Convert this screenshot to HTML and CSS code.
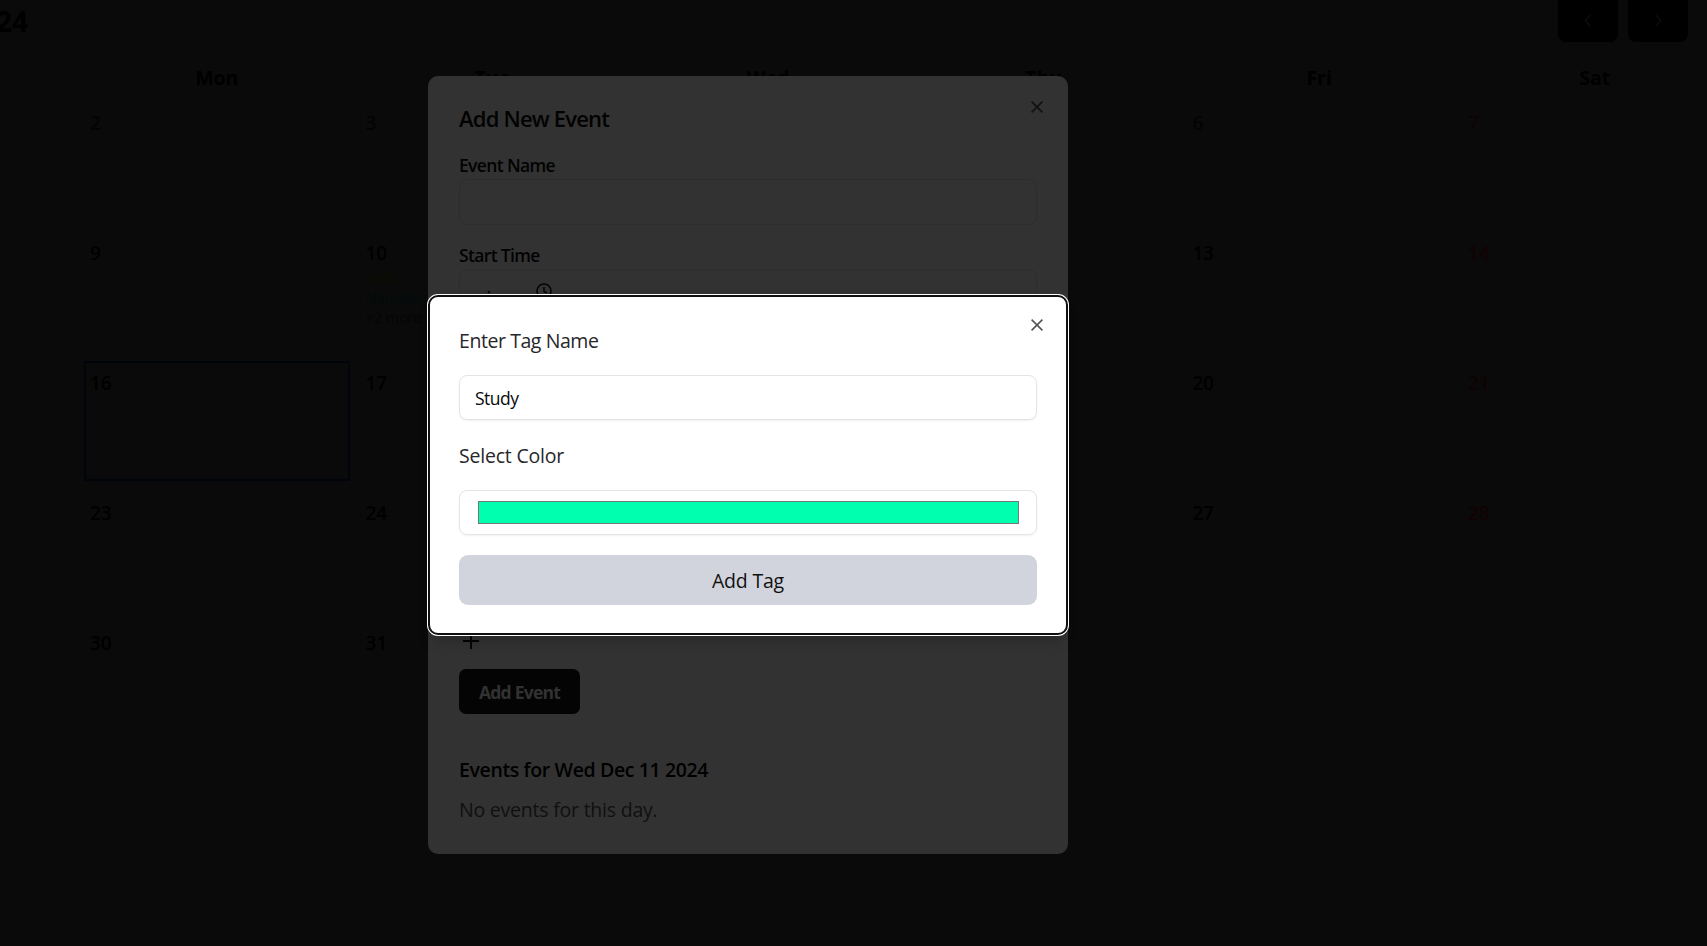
FILE: index.html
```html
<!DOCTYPE html>
<html lang="en">
<head>
<meta charset="utf-8">
<title>Calendar</title>
<link rel="stylesheet" href="styles.css">
</head>
<body>
<main class="calendar">
  <header class="toolbar">
    <h1 class="month">24</h1>
    <div class="nav">
      <button class="nav-button" aria-label="Previous"><svg width="19" height="19" viewBox="0 0 15 15"><path d="M9 3 4.9 7.5 9 12" fill="none" stroke="currentColor"/></svg></button>
      <button class="nav-button" aria-label="Next"><svg width="19" height="19" viewBox="0 0 15 15"><path d="M5.2 3l4.1 4.5L5.2 12" fill="none" stroke="currentColor"/></svg></button>
    </div>
  </header>
  <div class="weekdays"><span>Mon</span><span>Tue</span><span>Wed</span><span>Thu</span><span>Fri</span><span>Sat</span></div>
  <div class="days">
    <div class="day past">2</div><div class="day past">3</div><div class="day"></div><div class="day"></div><div class="day past">6</div><div class="day sat">7</div>
    <div class="day">9</div><div class="day">10<div class="events"><span class="yellow">Hello</span><span class="teal">Namaste</span><span class="more">+2 more</span></div></div><div class="day"></div><div class="day"></div><div class="day">13</div><div class="day sat strong">14</div>
    <div class="day today">16</div><div class="day">17</div><div class="day"></div><div class="day"></div><div class="day">20</div><div class="day sat">21</div>
    <div class="day">23</div><div class="day">24</div><div class="day"></div><div class="day"></div><div class="day">27</div><div class="day sat strong">28</div>
    <div class="day">30</div><div class="day">31</div>
  </div>
</main>

<section class="dialog event-dialog">
  <svg class="close" viewBox="0 0 12 12"><path d="M.6.6l10.8 10.8M11.4.6.6 11.4" stroke="currentColor" stroke-width="1.6"/></svg>
  <h2 class="dialog-title">Add New Event</h2>
  <label class="field-label">Event Name</label>
  <div class="field"></div>
  <label class="field-label second">Start Time</label>
  <div class="field time"><span>--:--</span><svg class="clock" viewBox="0 0 16 16" fill="none" stroke="currentColor" stroke-width="1.5"><circle cx="8" cy="8" r="7"/><path d="M8 4v4.5l3 1.5"/></svg></div>
  <svg class="plus" viewBox="0 0 18 18"><path d="M9 1v16M1 9h16" stroke="currentColor" stroke-width="1.8"/></svg>
  <button class="add-event">Add Event</button>
  <h3 class="list-title">Events for Wed Dec 11 2024</h3>
  <p class="empty">No events for this day.</p>
</section>

<section class="dialog tag-dialog">
  <svg class="close" viewBox="0 0 12 12"><path d="M.6.6l10.8 10.8M11.4.6.6 11.4" stroke="currentColor" stroke-width="1.6"/></svg>
  <p class="tag-label name-label">Enter Tag Name</p>
  <div class="tag-field">Study</div>
  <p class="tag-label">Select Color</p>
  <div class="tag-field color"><i class="swatch"></i></div>
  <button class="add-tag">Add Tag</button>
</section>
</body>
</html>
```
FILE: styles.css
```css
* { box-sizing: border-box; }
body {
  margin: 0;
  height: 946px;
  overflow: hidden;
  position: relative;
  background: #0a0a0a;
  color: #000;
  font-family: "Segoe UI", "Open Sans", sans-serif;
}
h1, h2, h3, p { margin: 0; font-weight: 400; }
button { border: 0; font: inherit; padding: 0; }

.calendar { width: 1728px; }
.toolbar {
  display: flex;
  justify-content: space-between;
  height: 64px;
  padding-right: 40px;
}
.month { margin-left: -4px; font-size: 28px; line-height: 42px; font-weight: 700; }
.nav { display: flex; gap: 10px; }
.nav-button {
  display: grid;
  place-items: center;
  width: 60px;
  height: 42px;
  padding-bottom: 2px;
  border-radius: 0 0 8px 8px;
  background: #000;
  color: #0d0d0d;
}
.weekdays, .days {
  display: grid;
  grid-template-columns: repeat(6, 265.6px);
  gap: 10px;
  padding-left: 84px;
}
.weekdays { height: 37px; font-size: 19.5px; line-height: 28px; font-weight: 700; text-align: center; }
.days { grid-auto-rows: 120px; }
.day {
  padding: 7px 5px;
  border: 1px solid #090909;
  font-size: 19px;
  line-height: 28px;
  font-weight: 600;
  letter-spacing: -.2px;
}
.past { color: #030303; }
.today { border: 2px solid #00050b; padding: 6px 4px; }
.sat { color: #0e0304; }
.sat.strong { color: #110203; }
.events { display: grid; font-size: 15px; line-height: 20px; font-weight: 400; letter-spacing: -.4px; }
.yellow { color: #0c0c02; }
.teal { color: #020c0b; }
.more { color: #050505; }

.dialog { position: absolute; left: 428px; width: 640px; }
.close { position: absolute; right: 25px; width: 12px; height: 12px; }
.event-dialog {
  top: 76px;
  height: 778px;
  padding: 23px 31px;
  border-radius: 10px;
  background: #323232;
}
.event-dialog .close { top: 25px; color: #111; }
.dialog-title { height: 53px; font-size: 22px; line-height: 38px; font-weight: 600; letter-spacing: -.8px; color: #020202; }
.field-label { display: block; height: 27px; font-size: 17.5px; line-height: 26px; font-weight: 600; letter-spacing: -.65px; color: #020202; }
.field {
  height: 46px;
  border: 1px solid #2d2d2d;
  border-radius: 8px;
}
.second { margin-top: 17px; }
.time { display: flex; gap: 33px; padding: 13px 15px; font-size: 18px; line-height: 22px; color: #020202; }
.clock { width: 16px; height: 16px; }
.plus { display: block; width: 18px; height: 18px; margin: 317px 0 19px 3px; }
.add-event {
  display: block;
  width: 121px;
  height: 45px;
  border-radius: 7px;
  background: #040404;
  color: #323232;
  font-size: 17.5px;
  font-weight: 700;
  letter-spacing: -.75px;
}
.list-title { margin-top: 42px; font-size: 19.5px; line-height: 28px; font-weight: 600; letter-spacing: -.37px; }
.empty { margin-top: 12px; font-size: 19.5px; line-height: 28px; letter-spacing: -.22px; color: #101010; }

.tag-dialog {
  top: 295px;
  height: 340px;
  padding: 30px 29px;
  border: 2px solid #101010;
  border-radius: 10px;
  background: #fff;
  color: #27272a;
  box-shadow: 0 0 0 1px #fff, 0 10px 15px -5px rgba(0, 0, 0, .22);
}
.tag-dialog .close { top: 22px; right: 23px; color: #555; }
.tag-label { height: 48px; font-size: 19.5px; line-height: 28px; letter-spacing: -.2px; }
.name-label { letter-spacing: -.43px; }
.tag-field {
  height: 45px;
  padding: 0 15px;
  margin-bottom: 22px;
  border: 1px solid #e4e4e7;
  border-radius: 8px;
  box-shadow: 0 1px 2px rgba(0, 0, 0, .06);
  color: #09090b;
  font-size: 17.5px;
  line-height: 44px;
  letter-spacing: -.5px;
}
.color { padding: 10px 17px 10px 18px; margin-bottom: 20px; }
.swatch { display: block; height: 23px; border: 1px solid #777; background: #00ffae; }
.add-tag {
  width: 100%;
  height: 50px;
  border-radius: 9px;
  background: #d1d4dc;
  color: #111;
  font-size: 19.5px;
  letter-spacing: -.2px;
}
```
